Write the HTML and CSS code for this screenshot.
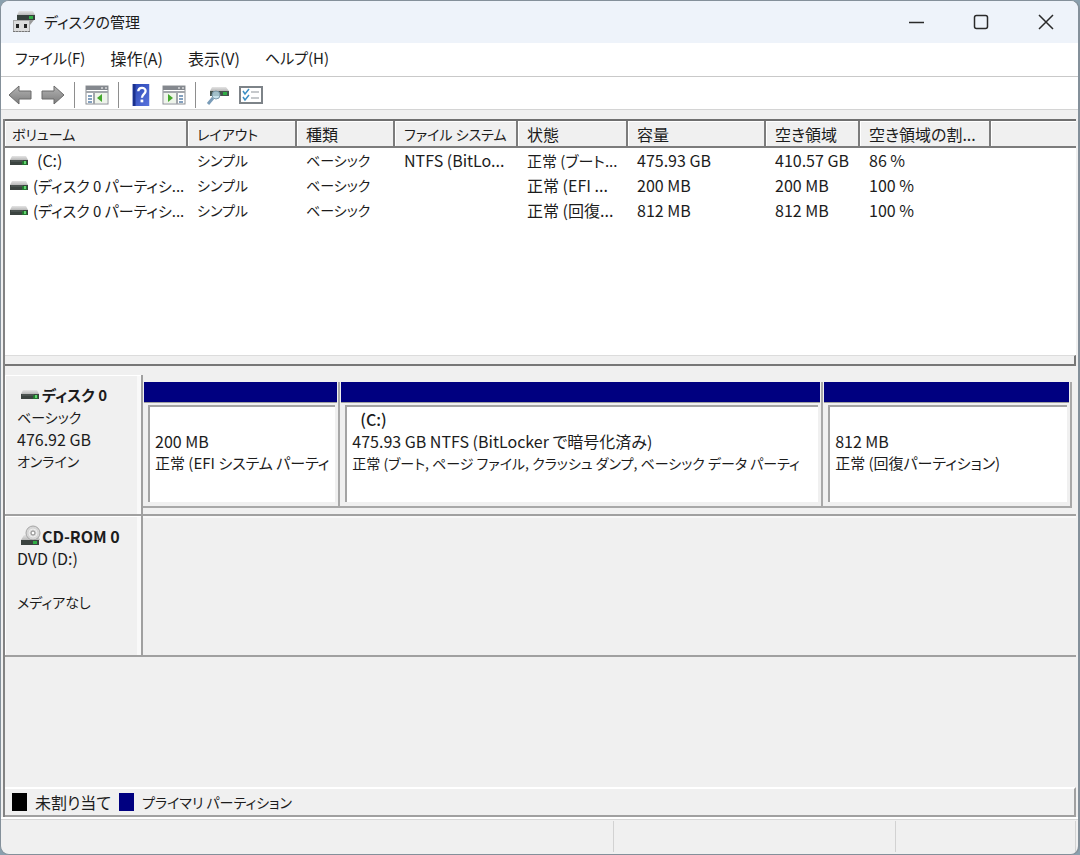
FILE: index.html
```html
<!DOCTYPE html>
<html lang="ja">
<head>
<meta charset="utf-8">
<title>ディスクの管理</title>
<link rel="stylesheet" href="styles.css">
</head>
<body>
<svg class="defs" aria-hidden="true">
  <defs>
    <linearGradient id="metal" x1="0" y1="0" x2="0" y2="1">
      <stop offset="0" stop-color="#e4e4e4"/><stop offset="1" stop-color="#b8b8b8"/>
    </linearGradient>
    <linearGradient id="arrow" x1="0" y1="0" x2="0" y2="1">
      <stop offset="0" stop-color="#b4b4b4"/><stop offset="1" stop-color="#7c7c7c"/>
    </linearGradient>
    <linearGradient id="book" x1="0" y1="0" x2="1" y2="1">
      <stop offset="0" stop-color="#2744b4"/><stop offset="1" stop-color="#5a74dc"/>
    </linearGradient>
  </defs>
  <symbol id="drive" viewBox="0 0 20 12">
    <path d="M3 1h14l2 4H1z" fill="url(#metal)"/>
    <rect x="1" y="5" width="18" height="5" fill="#3b4340"/>
    <path d="M2 6h12" stroke="#5c6461"/>
    <rect x="13" y="6" width="5" height="4" fill="#23762f"/>
    <rect x="15" y="6" width="2" height="3" fill="#62d470"/>
  </symbol>
</svg>
<div class="window">
  <header class="titlebar">
    <svg class="app-icon" viewBox="0 0 24 24" aria-hidden="true">
      <path d="M7 1h14l2 4H5z" fill="url(#metal)"/>
      <rect x="5" y="5" width="18" height="5" fill="#37403c"/>
      <rect x="17" y="6" width="4" height="3" fill="#2fae44"/>
      <path d="M18 10h4l-4 5z" fill="#999"/>
      <rect x="1.500" y="10.500" width="16" height="11" fill="#dcdcdc" stroke="#a8a8a8"/>
      <path d="M1 21.500h17" stroke="#777" stroke-dasharray="2 1"/>
      <path d="M5.500 14v4M13.500 14v4" stroke="#222" stroke-width="3"/>
    </svg>
    <h1>ディスクの管理</h1>
    <div class="controls">
      <button aria-label="最小化"><svg viewBox="0 0 16 16"><path d="M1 8.500h15"/></svg></button>
      <button aria-label="最大化"><svg viewBox="0 0 16 16"><rect x="1.500" y="1.500" width="13" height="13" rx="2"/></svg></button>
      <button aria-label="閉じる"><svg viewBox="0 0 16 16"><path d="M1 1l14 14M15 1L1 15"/></svg></button>
    </div>
  </header>
  <nav class="menubar">
    <button class="mixed">ファイル(F)</button><button>操作(A)</button><button>表示(V)</button><button class="mixed">ヘルプ(H)</button>
  </nav>
  <div class="toolbar">
    <button aria-label="戻る"><svg viewBox="0 0 24 20"><path d="M1 10L11 1v5h12v8H11v5z" fill="url(#arrow)" stroke="#6b6b6b"/></svg></button>
    <button aria-label="進む"><svg viewBox="0 0 24 20"><path d="M23 10L13 1v5H1v8h12v5z" fill="url(#arrow)" stroke="#6b6b6b"/></svg></button>
    <span class="sep"></span>
    <button aria-label="コンソール ツリー"><svg viewBox="0 0 24 20"><rect x="1" y="1" width="22" height="18" fill="#fff" stroke="#8b8f94"/><path d="M1 3h22" stroke="#84888e" stroke-width="4"/><path d="M16 3h2M20 3h2" stroke="#fff"/><path d="M1 7h22M9 7v12" stroke="#a2a6ab" stroke-width="2"/><path d="M3 11h4M3 14h4M3 17h4" stroke="#5c83ab" stroke-width="1.500"/><rect x="10" y="8" width="12" height="10" fill="#eef4ea"/><path d="M17 9v8l-5-4z" fill="#45a82d"/></svg></button>
    <span class="sep"></span>
    <button aria-label="ヘルプ"><svg viewBox="0 0 24 24"><rect x="3" width="18" height="24" fill="url(#book)"/><path d="M4.500 0v24" stroke="#1b318e" stroke-width="3"/><path d="M9 8c0-5 8-5 8-.5 0 3.500-4 3.500-4 7.500" fill="none" stroke="#fff" stroke-width="2.500"/><rect x="11.500" y="17" width="3" height="3" fill="#fff"/></svg></button>
    <button aria-label="操作ウィンドウ"><svg viewBox="0 0 24 20"><rect x="1" y="1" width="22" height="18" fill="#fff" stroke="#8b8f94"/><path d="M1 3h22" stroke="#84888e" stroke-width="4"/><path d="M16 3h2M20 3h2" stroke="#fff"/><path d="M1 7h22M15 7v12" stroke="#a2a6ab" stroke-width="2"/><path d="M17 11h4M17 14h4M17 17h4" stroke="#5c83ab" stroke-width="1.500"/><rect x="2" y="8" width="12" height="10" fill="#eef4ea"/><path d="M6 9v8l5-4z" fill="#45a82d"/></svg></button>
    <span class="sep"></span>
    <button aria-label="再スキャン"><svg viewBox="0 0 24 20"><path d="M6 2h14l3 4H4z" fill="url(#metal)"/><rect x="4" y="6" width="19" height="5" fill="#46544e"/><rect x="17" y="7" width="4" height="3" fill="#2fae44"/><path d="M7 13l-5 6" stroke="#7a9cb8" stroke-width="3"/><circle cx="10" cy="10" r="4" fill="#b9dbe9" fill-opacity=".8" stroke="#7b99ab"/></svg></button>
    <button aria-label="設定"><svg viewBox="0 0 24 20"><rect x="1" y="2" width="22" height="16" fill="#fff" stroke="#7d8388" stroke-width="2"/><path d="M4 6l2 3 4-5M4 12l2 3 4-5" fill="none" stroke="#3c8fc4" stroke-width="1.500"/><path d="M12 7h8M12 13h8" stroke="#b4b8bc" stroke-width="1.500"/></svg></button>
  </div>

  <main class="panes">
    <section class="volume-list">
      <table>
        <colgroup><col class="c-vol"><col class="c-layout"><col class="c-type"><col class="c-fs"><col class="c-status"><col class="c-cap"><col class="c-free"><col class="c-pct"><col></colgroup>
        <thead>
          <tr><th class="kana">ボリューム</th><th class="kana">レイアウト</th><th>種類</th><th class="kana">ファイル システム</th><th>状態</th><th>容量</th><th>空き領域</th><th>空き領域の割...</th><th></th></tr>
        </thead>
        <tbody>
          <tr><td><svg class="drive"><use href="#drive"/></svg><span class="letter">(C:)</span></td><td class="kana">シンプル</td><td class="kana">ベーシック</td><td>NTFS (BitLo...</td><td class="mixed">正常 (ブート...</td><td>475.93 GB</td><td>410.57 GB</td><td>86 %</td><td></td></tr>
          <tr><td class="mixed"><svg class="drive"><use href="#drive"/></svg>(ディスク 0 パーティシ...</td><td class="kana">シンプル</td><td class="kana">ベーシック</td><td></td><td>正常 (EFI ...</td><td>200 MB</td><td>200 MB</td><td>100 %</td><td></td></tr>
          <tr><td class="mixed"><svg class="drive"><use href="#drive"/></svg>(ディスク 0 パーティシ...</td><td class="kana">シンプル</td><td class="kana">ベーシック</td><td></td><td>正常 (回復...</td><td>812 MB</td><td>812 MB</td><td>100 %</td><td></td></tr>
        </tbody>
      </table>
    </section>
    <div class="splitter"></div>
    <section class="graph">
      <article class="disk">
        <div class="disk-info">
          <h2 class="mixed"><svg class="drive"><use href="#drive"/></svg>ディスク 0</h2>
          <p class="kana">ベーシック</p><p>476.92 GB</p><p class="kana">オンライン</p>
        </div>
        <div class="volumes">
          <div class="volume efi"><div class="bar"></div><div class="box"><p class="name"></p><p>200 MB</p><p class="mixed">正常 (EFI システム パーティ</p></div></div>
          <div class="volume boot"><div class="bar"></div><div class="box"><p class="name">(C:)</p><p>475.93 GB NTFS (BitLocker で暗号化済み)</p><p class="kana">正常 (ブート, ページ ファイル, クラッシュ ダンプ, ベーシック データ パーティ</p></div></div>
          <div class="volume recovery"><div class="bar"></div><div class="box"><p class="name"></p><p>812 MB</p><p class="mixed">正常 (回復パーティション)</p></div></div>
        </div>
      </article>
      <article class="disk">
        <div class="disk-info">
          <h2><svg class="cd" viewBox="0 0 22 22"><path d="M4 10h14l2 5H1z" fill="url(#metal)"/><circle cx="13" cy="8" r="7" fill="#d6d6d6" stroke="#a5a5a5"/><circle cx="13" cy="8" r="4" fill="none" stroke="#efefef"/><circle cx="13" cy="8" r="2" fill="#fff" stroke="#888"/><rect x="1" y="15" width="18" height="5" fill="#3b4340"/><rect x="13" y="16" width="4" height="3" fill="#2fae44"/></svg>CD-ROM 0</h2>
          <p>DVD (D:)</p><p></p><p class="kana">メディアなし</p>
        </div>
        <div class="volumes"></div>
      </article>
    </section>
    <div class="legend">
      <span class="swatch free"></span><span>未割り当て</span>
      <span class="swatch primary"></span><span class="kana">プライマリ パーティション</span>
    </div>
  </main>
  <footer class="statusbar"><span></span><span></span><span></span></footer>
</div>
</body>
</html>
```

FILE: styles.css
```css
* { box-sizing: border-box; }

body {
  margin: 0;
  height: 100vh;
  background: #8aa0ae;
  color: #1c1c1c;
  font: 16px/22px "Noto Sans CJK JP", "Noto Sans", sans-serif;
  font-feature-settings: "palt";
  white-space: nowrap;
}

h1, h2, p { margin: 0; font-size: 16px; }
h1 { font-size: 15px; font-weight: 400; }
h2 { font-weight: 600; }
p { height: 22px; }
svg { display: block; flex: none; }
.defs { position: absolute; width: 0; height: 0; }

button {
  padding: 0;
  border: 0;
  background: none;
  color: inherit;
  font: inherit;
  font-feature-settings: inherit;
}
.mixed { font-size: 15px; }
.kana { font-size: 14px; }

.window {
  display: flex;
  flex-direction: column;
  height: 100vh;
  border: 1px solid #84909a;
  border-right-width: 2px;
  border-radius: 9px;
  background: #f0f0f0;
  overflow: hidden;
}

/* Title bar */
.titlebar {
  display: flex;
  align-items: center;
  height: 42px;
  padding-left: 11px;
  background: #eef3fa;
}
.app-icon { width: 24px; height: 24px; margin-right: 8px; }
.controls { display: flex; margin-left: auto; }
.controls button { display: grid; place-items: center; width: 65px; height: 42px; }
.controls svg { width: 16px; height: 16px; fill: none; stroke: #2a2a2a; stroke-width: 1.5; }

/* Menu and tools */
.menubar {
  display: flex;
  gap: 25px;
  height: 34px;
  padding: 0 0 3px 14px;
  background: #fff;
  border-bottom: 1px solid #c9c9c9;
}
.toolbar {
  display: flex;
  align-items: center;
  height: 33px;
  padding: 3px 0 0 7px;
  background: #fff;
  border-bottom: 1px solid #d4d4d4;
}
.toolbar button { width: 24px; margin-right: 9px; }
.toolbar svg { width: 24px; height: 22px; }
.sep { width: 1px; height: 26px; margin-right: 10px; background: #8e8e8e; }

/* Panes */
.panes {
  display: flex;
  flex: 1;
  flex-direction: column;
  min-height: 0;
  margin: 9px 2px 0 2px;
  border-left: 2px solid #838383;
}
.volume-list {
  height: 236px;
  background: #fff;
  border-top: 2px solid #6f6f6f;
}
table { width: 100%; table-layout: fixed; border-collapse: separate; border-spacing: 0; }
.c-vol { width: 183px; }
.c-layout { width: 109px; }
.c-type { width: 98px; }
.c-fs { width: 123px; }
.c-status { width: 110px; }
.c-cap { width: 138px; }
.c-free { width: 94px; }
.c-pct { width: 131px; }
th, td { padding: 0 0 0 9px; text-align: left; font-weight: 400; overflow: hidden; }
th {
  height: 27px;
  background: #f0f0f0;
  border-right: 2px solid #7c7c7c;
  border-bottom: 2px solid #7c7c7c;
  box-shadow: inset 1px 1px #fff;
}
th:first-child { padding-left: 7px; }
th:last-child { border-right: 0; }
td { height: 25px; line-height: 25px; }
td:first-child { padding-left: 4px; }
.drive { display: inline-block; width: 20px; height: 12px; margin-right: 4px; }
.letter { padding-left: 4px; }

.splitter {
  height: 11px;
  background: #f0f0f0;
  border-top: 1px solid #dcdcdc;
  border-right: 2px solid #777;
  border-bottom: 2px solid #777;
}

/* Disk graph */
.graph { flex: 1; min-height: 0; padding-top: 9px; }
.disk { display: flex; height: 141px; }
.disk-info {
  width: 138px;
  padding: 9px 0 0 12px;
  border-right: 2px solid #a0a0a0;
  border-bottom: 2px solid #a0a0a0;
  box-shadow: inset 1px 1px #fff, inset -4px 0 #f9f9f9;
}
.disk-info h2 { display: flex; align-items: center; height: 22px; padding-left: 3px; }
.disk-info h2 .drive { margin-right: 2px; }
.cd { width: 22px; height: 22px; align-self: flex-end; }
.volumes {
  display: flex;
  flex: 1;
  min-width: 0;
  padding: 7px 4px 6px 0;
  border-bottom: 2px solid #a0a0a0;
}
.disk + .disk .volumes { box-shadow: inset 0 2px #f8f8f8; }
.volume {
  display: flex;
  flex-direction: column;
  min-width: 0;
  border-right: 2px solid #a8a8a8;
  border-bottom: 2px solid #a8a8a8;
  padding-left: 1px;
}
.efi { flex: 196; }
.boot { flex: 484; }
.recovery { flex: 248; }
.bar { height: 21px; margin-right: 1px; background: #000080; border-bottom: 1px solid #a0a0a0; }
.box {
  flex: 1;
  margin: 2px 3px 4px 4px;
  padding: 1px 0 0 5px;
  background: #fff;
  border-top: 2px solid #a4a4a4;
  border-left: 2px solid #a4a4a4;
}
.box .name { padding-left: 8px; font-weight: 500; }

/* Legend and status */
.legend {
  display: flex;
  align-items: center;
  height: 30px;
  padding-left: 7px;
  border-top: 2px solid #fff;
  border-right: 2px solid #a0a0a0;
  border-bottom: 2px solid #a0a0a0;
}
.swatch { width: 15px; height: 18px; margin-right: 8px; }
.free { background: #000; }
.primary { margin-left: 8px; background: #000080; }
.statusbar {
  display: grid;
  grid-template-columns: 612fr 282fr 180fr;
  height: 37px;
  padding: 4px 2px 2px 0;
  box-shadow: inset 0 2px #fff, inset 0 3px #d6d6d6;
}
.statusbar span { border-right: 1px solid #d2d2d2; }
```
